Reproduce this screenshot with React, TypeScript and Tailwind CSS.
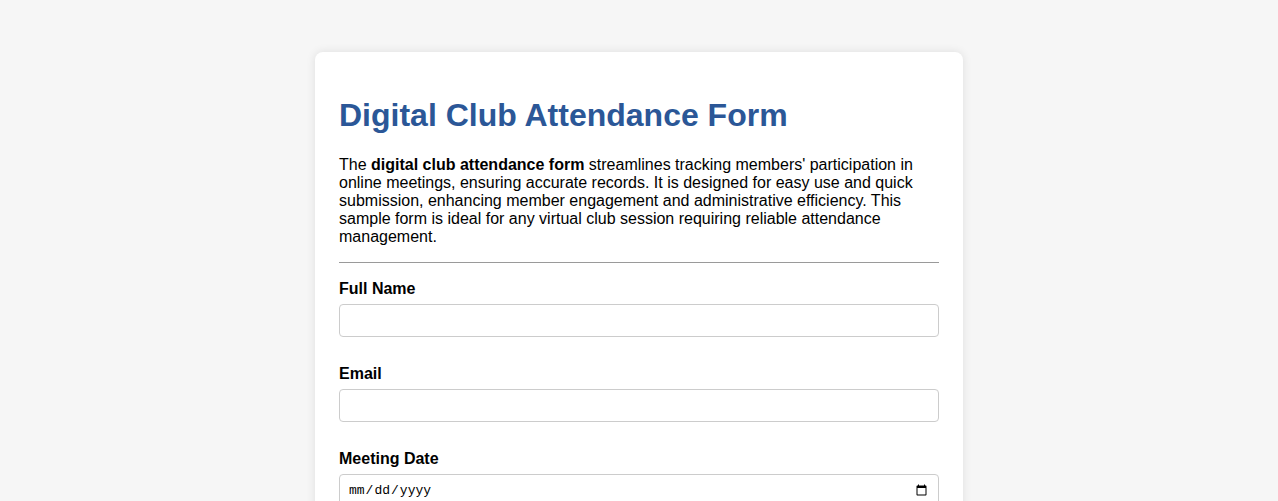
export default function App() {
  return (
    <div className="min-h-screen bg-[#f6f6f6] pt-[52px] font-['Liberation_Sans',Arial,sans-serif] text-black">
      <div className="mx-auto w-[648px] rounded-lg bg-white p-6 shadow-[0_0_10px_rgba(0,0,0,0.1)]">
        <h1 className="my-[21.44px] text-[32px] leading-[normal] font-bold text-[#2b5797]">
          Digital Club Attendance Form
        </h1>
        <p className="my-4 text-base leading-[normal]">
          The <strong>digital club attendance form</strong> streamlines tracking members' participation in
          online meetings, ensuring accurate records. It is designed for easy use and quick
          submission, enhancing member engagement and administrative efficiency. This
          sample form is ideal for any virtual club session requiring reliable attendance
          management.
        </p>
        <hr className="mt-4 mb-[17px] border-t border-[#9a9a9a]" />
        <form className="flex flex-col">
          <div className="mb-[28px]">
            <label className="mb-[6px] block text-base leading-[normal] font-bold">Full Name</label>
            <input
              type="text"
              className="block h-[33px] w-full rounded border border-[#cccccc] px-2 text-base"
            />
          </div>
          <div className="mb-[28px]">
            <label className="mb-[6px] block text-base leading-[normal] font-bold">Email</label>
            <input
              type="email"
              className="block h-[33px] w-full rounded border border-[#cccccc] px-2 text-base"
            />
          </div>
          <div className="mb-[28px]">
            <label className="mb-[6px] block text-base leading-[normal] font-bold">Meeting Date</label>
            <input
              type="date"
              className="block h-[33px] w-full rounded border border-[#cccccc] px-2 font-['Liberation_Mono',monospace] text-[13px]"
            />
          </div>
          <div className="mb-[28px]">
            <label className="mb-[6px] block text-base leading-[normal] font-bold">Club Name</label>
            <input
              type="text"
              className="block h-[33px] w-full rounded border border-[#cccccc] px-2 text-base"
            />
          </div>
        </form>
      </div>
    </div>
  );
}
